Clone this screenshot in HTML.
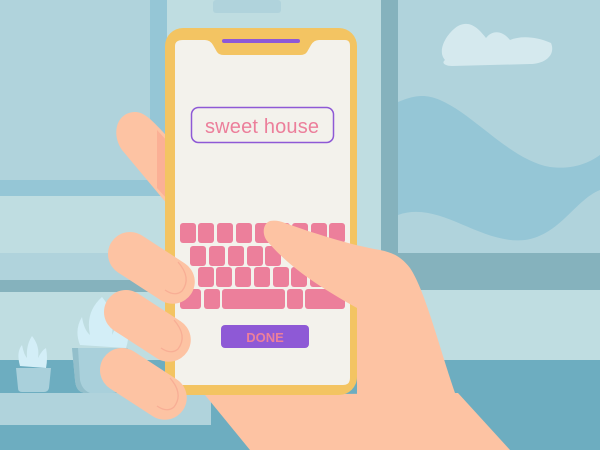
<!DOCTYPE html>
<html><head><style>html,body{margin:0;padding:0;width:600px;height:450px;overflow:hidden}</style></head><body>
<svg width="600" height="450" viewBox="0 0 600 450" xmlns="http://www.w3.org/2000/svg">
<rect width="600" height="450" fill="#bfdde1"/>
<rect x="0" y="0" width="150" height="180" fill="#b0d3dc"/>
<rect x="150" y="0" width="17" height="196" fill="#95c6d6"/>
<rect x="0" y="180" width="167" height="16" fill="#95c6d6"/>
<rect x="0" y="253" width="167" height="27" fill="#b0d3dc"/>
<rect x="0" y="280" width="167" height="12" fill="#85b2bd"/>
<rect x="213" y="0" width="68" height="13" rx="3" fill="#b0d3dc"/>
<rect x="381" y="0" width="17" height="290" fill="#85b2bd"/>
<rect x="398" y="0" width="202" height="253" fill="#b0d3dc"/>
<path d="M398 102 C415 95 425 94 440 100 C475 115 510 160 550 167 C575 170 590 162 600 155 L600 253 L398 253Z" fill="#95c6d6"/>
<path d="M398 215 C440 200 480 245 525 240 C560 235 575 200 600 190 L600 253 L398 253Z" fill="#b0d3dc"/>
<path d="M445 60 C436 50 448 32 458 26 C470 20 478 28 486 38 C492 30 502 30 510 40 C520 36 535 36 551 43 C556 55 545 64 530 64 L452 66 C445 66 441 63 445 60Z" fill="#d5e9ee"/>
<rect x="398" y="253" width="202" height="37" fill="#85b2bd"/>
<rect x="0" y="360" width="600" height="90" fill="#6dadc0"/>
<rect x="0" y="393" width="211" height="32" fill="#b0d3dc"/>
<path d="M20 366 Q16 352 22 345 Q24 355 27 358 Q26 345 32 336 Q40 346 38 358 Q42 350 46 348 Q48 358 46 368Z" fill="#d3eef7"/>
<path d="M16 368 L51 368 L49 388 Q48 392 44 392 L22 392 Q18 392 18 388Z" fill="#a9d0db"/>
<path d="M80 345 Q74 330 82 317 Q84 330 90 335 Q85 312 102 297 Q115 312 112 335 Q118 322 125 312 Q132 330 126 348Z" fill="#d3eef7"/>
<path d="M72 348 L128 348 L126 380 Q124 393 112 393 L86 393 Q76 393 75 380Z" fill="#a9d0db"/>
<path d="M72 348 L78 348 L80 380 Q82 390 90 393 L86 393 Q76 393 75 380Z" fill="#93bfcb"/>
<path d="M168 205 L122 150 C110 132 118 112 135 112 C145 112 152 120 175 145 Z" fill="#fdc3a3"/>
<path d="M157 130 L168 142 L168 200 L157 188Z" fill="#fbb095"/>
<path d="M205 395 L458 393 L510 450 L250 450Z" fill="#fdc3a3"/>
<rect x="165" y="28" width="192" height="367" rx="18" fill="#f3c462"/>
<path d="M183 40 L205 40 Q210 40 213 45 L217 52 Q219 55 224 55 L300 55 Q305 55 307 52 L311 45 Q314 40 319 40 L345 40 Q350 40 350 46 L350 378 Q350 385 343 385 L182 385 Q175 385 175 378 L175 46 Q175 40 183 40Z" fill="#f3f2ec"/>
<rect x="222" y="39" width="78" height="4" rx="2" fill="#8e59d6"/>
<rect x="191.5" y="107.5" width="142" height="35" rx="7" fill="none" stroke="#8e59d6" stroke-width="1.5"/>
<text x="262" y="133" text-anchor="middle" font-family="Liberation Sans, sans-serif" font-size="20" fill="#ec7f9b" textLength="114">sweet house</text>
<g fill="#ec7f9b">
<rect x="180" y="223" width="16" height="20" rx="3"/><rect x="198" y="223" width="16" height="20" rx="3"/><rect x="217" y="223" width="16" height="20" rx="3"/><rect x="236" y="223" width="16" height="20" rx="3"/><rect x="255" y="223" width="16" height="20" rx="3"/><rect x="274" y="223" width="16" height="20" rx="3"/><rect x="292" y="223" width="16" height="20" rx="3"/><rect x="311" y="223" width="16" height="20" rx="3"/><rect x="329" y="223" width="16" height="20" rx="3"/>
<rect x="190" y="246" width="16" height="20" rx="3"/><rect x="209" y="246" width="16" height="20" rx="3"/><rect x="228" y="246" width="16" height="20" rx="3"/><rect x="247" y="246" width="16" height="20" rx="3"/><rect x="265" y="246" width="16" height="20" rx="3"/>
<rect x="198" y="267" width="16" height="20" rx="3"/><rect x="216" y="267" width="16" height="20" rx="3"/><rect x="235" y="267" width="16" height="20" rx="3"/><rect x="254" y="267" width="16" height="20" rx="3"/><rect x="273" y="267" width="16" height="20" rx="3"/><rect x="291" y="267" width="16" height="20" rx="3"/><rect x="310" y="267" width="16" height="20" rx="3"/>
<rect x="180" y="289" width="21" height="20" rx="3"/><rect x="204" y="289" width="16" height="20" rx="3"/><rect x="222" y="289" width="63" height="20" rx="3"/><rect x="287" y="289" width="16" height="20" rx="3"/><rect x="305" y="289" width="40" height="20" rx="3"/>
</g>
<rect x="221" y="325" width="88" height="23" rx="4" fill="#8e59d6"/>
<text x="265" y="342" text-anchor="middle" font-family="Liberation Sans, sans-serif" font-size="13" font-weight="bold" fill="#ec7f9b">DONE</text>
<path d="M270 221 C262 224 262 236 268 242 C285 262 310 282 357 308 L357 400 L460 400 L455 393 C440 350 425 290 410 268 C400 255 390 252 380 250 C350 245 310 232 285 223 C280 221 275 220 270 221Z" fill="#fdc3a3"/>
<g fill="#fdc3a3">
<rect x="108" y="232" width="95" height="44" rx="22" transform="rotate(33 130 254)"/>
<rect x="104" y="290" width="95" height="44" rx="22" transform="rotate(33 126 312)"/>
<rect x="100" y="348" width="95" height="44" rx="22" transform="rotate(33 122 370)"/>
</g>
<g fill="none" stroke="#f8ae95" stroke-width="1.3">
<path d="M178 262 Q192 278 182 291 Q175 297 165 290"/>
<path d="M174 320 Q188 336 178 349 Q171 355 161 348"/>
<path d="M170 378 Q184 394 174 407 Q167 413 157 406"/>
</g>
</svg>
</body></html>
